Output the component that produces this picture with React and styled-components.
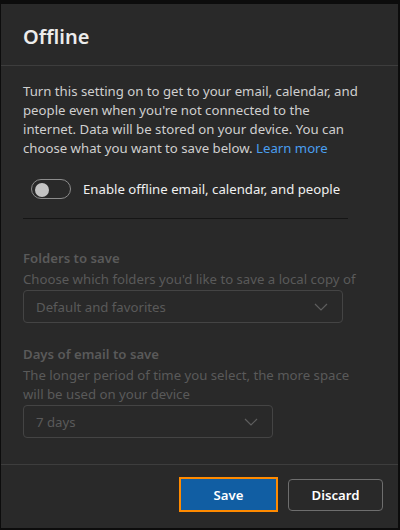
import React, { useState } from 'react';
import styled, { createGlobalStyle } from 'styled-components';

const GlobalStyle = createGlobalStyle`
  html, body {
    margin: 0;
    padding: 0;
    background: #0c0c0c;
  }
  * {
    box-sizing: border-box;
  }
`;

const Panel = styled.div`
  margin: 4px 2px 2px 1px;
  height: 524px;
  background: #292929;
  display: flex;
  flex-direction: column;
  font-family: "Noto Sans", "Open Sans", sans-serif;
  color: #d2d2d2;
`;

const Header = styled.div`
  height: 62px;
  padding: 0 22px;
  display: flex;
  align-items: center;
  border-bottom: 1px solid #3d3d3d;
`;

const Title = styled.h1`
  margin: 0;
  padding-top: 4px;
  font-size: 20px;
  font-weight: 600;
  color: #ececec;
`;

const Body = styled.div`
  flex: 1;
  padding: 16px 22px 0;
`;

const Intro = styled.p`
  margin: 0;
  max-width: 342px;
  font-size: 13.2px;
  line-height: 19px;
  color: #cfcfcf;
`;

const Link = styled.span`
  color: #4a9ff0;
  cursor: pointer;
`;

const ToggleRow = styled.label`
  display: flex;
  align-items: center;
  gap: 12px;
  padding: 21px 0 0 8px;
  font-size: 13.2px;
  color: #f0f0f0;
  cursor: pointer;
`;

const Track = styled.span`
  position: relative;
  width: 40px;
  height: 20px;
  border-radius: 10px;
  border: 1px solid #8c8c8c;
  flex-shrink: 0;
`;

const Knob = styled.span`
  position: absolute;
  top: 2.5px;
  left: ${p => (p.$on ? '22px' : '2.5px')};
  width: 14px;
  height: 14px;
  border-radius: 50%;
  background: #c4c4c4;
`;

const Rule = styled.div`
  width: 325px;
  height: 1px;
  background: #151515;
  margin-top: 19px;
`;

const Section = styled.div`
  margin-top: ${p => p.$top || 0}px;
  color: #5a5a5a;
`;

const SectionTitle = styled.div`
  font-size: 13.2px;
  font-weight: 600;
  line-height: 20px;
  margin-bottom: 2px;
`;

const SectionText = styled.div`
  font-size: 13.2px;
  line-height: 19px;
  white-space: nowrap;
`;

const Select = styled.div`
  width: ${p => p.$width}px;
  height: 33px;
  margin-top: 1px;
  border: 1px solid #444;
  border-radius: 4px;
  display: flex;
  align-items: center;
  justify-content: space-between;
  padding: 0 14px 0 12px;
  font-size: 13.2px;
  color: #5a5a5a;
`;

const Footer = styled.div`
  height: 64px;
  border-top: 1px solid #3d3d3d;
  display: flex;
  align-items: center;
  justify-content: flex-end;
  gap: 10px;
  padding: 0 15px 4px 0;
`;

const Button = styled.button`
  font-family: "Noto Sans", "Open Sans", sans-serif;
  font-size: 13.2px;
  font-weight: 600;
  color: #ffffff;
  border-radius: 4px;
  cursor: pointer;
  width: ${p => (p.$primary ? 99 : 95)}px;
  height: ${p => (p.$primary ? 35 : 32)}px;
  background: ${p => (p.$primary ? '#115ea3' : 'transparent')};
  border: ${p => (p.$primary ? '2px solid #ff8a00' : '1px solid #6e6e6e')};
  ${p => p.$primary && 'border-radius: 0;'}
`;

const Chevron = () => (
  <svg width="14" height="8" viewBox="0 0 14 8" fill="none">
    <path d="M1 1l6 6 6-6" stroke="#5e5e5e" strokeWidth="1.2" />
  </svg>
);

export default function App() {
  const [on, setOn] = useState(false);

  return (
    <>
      <GlobalStyle />
      <Panel>
        <Header>
          <Title>Offline</Title>
        </Header>
        <Body>
          <Intro>
            Turn this setting on to get to your email, calendar, and people even when
            you're not connected to the internet. Data will be stored on your device.
            You can choose what you want to save below. <Link>Learn more</Link>
          </Intro>
          <ToggleRow onClick={() => setOn(!on)}>
            <Track>
              <Knob $on={on} />
            </Track>
            Enable offline email, calendar, and people
          </ToggleRow>
          <Rule />
          <Section $top={29}>
            <SectionTitle>Folders to save</SectionTitle>
            <SectionText>Choose which folders you'd like to save a local copy of</SectionText>
            <Select $width={320}>
              Default and favorites
              <Chevron />
            </Select>
          </Section>
          <Section $top={21}>
            <SectionTitle>Days of email to save</SectionTitle>
            <SectionText>The longer period of time you select, the more space</SectionText>
            <SectionText>will be used on your device</SectionText>
            <Select $width={250}>
              7 days
              <Chevron />
            </Select>
          </Section>
        </Body>
        <Footer>
          <Button $primary>Save</Button>
          <Button>Discard</Button>
        </Footer>
      </Panel>
    </>
  );
}
